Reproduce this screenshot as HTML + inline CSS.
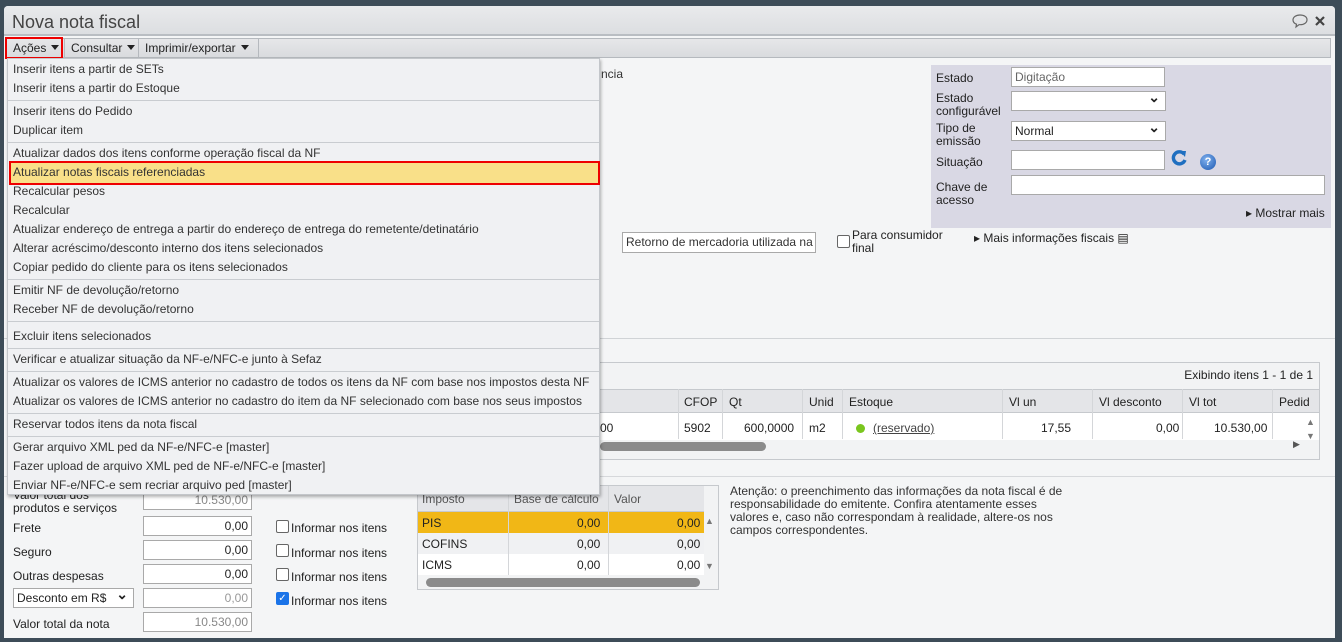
<!DOCTYPE html>
<html><head><meta charset="utf-8"><style>
*{box-sizing:border-box;margin:0;padding:0}
body{width:1342px;height:642px;background:#3d4c58;font-family:"Liberation Sans",Arial,sans-serif;font-size:12px;color:#222;position:relative;overflow:hidden}
.a{position:absolute;white-space:nowrap}
.win{left:4px;top:6px;width:1331px;height:632px;background:#f4f5f6;border-radius:4px 4px 0 0;overflow:hidden}
.title{left:0;top:0;width:1331px;height:30px;background:linear-gradient(#e9eaec,#dcdee1);border-bottom:2px solid #b9bdc2}
.title span{position:absolute;left:8px;top:6px;font-size:18px;color:#444}
.tb{left:2px;top:32px;width:1325px;height:20px;background:linear-gradient(#e6e7e9,#d9dbde);border:1px solid #b5b9be}
.tb div{position:absolute;top:0;height:18px;line-height:18px;padding-left:6px;border-right:1px solid #b5b9be}
.tri{display:inline-block;width:0;height:0;border-left:4px solid transparent;border-right:4px solid transparent;border-top:5px solid #222;margin-left:5px;vertical-align:2px}
.inp{position:absolute;background:#fff;border:1px solid #a9a9a9;height:20px;line-height:18px;padding:0 3px;font-size:12px;white-space:nowrap;overflow:hidden}
.sel::after{content:"⌄";position:absolute;right:5px;top:-4px;font-size:14px;font-weight:bold}
.menu{left:3px;top:52px;width:593px;height:437px;background:#f0f1f3;border:1px solid #c3c6ca;box-shadow:1px 2px 3px rgba(0,0,0,.3)}
.mi{position:absolute;left:5px;height:19px;line-height:19px;white-space:nowrap;color:#333}
.sep{position:absolute;left:0;width:591px;height:1px;background:#c9ccd0}
.cb{position:absolute;width:13px;height:13px;border:1px solid #666;border-radius:2px;background:#fff}
</style></head><body>
<div class="a win">
 <div class="a title"><span>Nova nota fiscal</span>
  <svg class="a" style="left:1287px;top:7px" width="18" height="16" viewBox="0 0 18 16"><path d="M9 2C5 2 2 4 2 7c0 2 1.5 3.5 3.5 4.2L5 14l3-2.3c.3 0 .7 0 1 0 4 0 7-2 7-5S13 2 9 2z" fill="none" stroke="#666" stroke-width="1.2"/></svg>
  <svg class="a" style="left:1311px;top:10px" width="10" height="10"><path d="M1 1L9 9M9 1L1 9" stroke="#444" stroke-width="2.2"/></svg>
 </div>
 <div class="a tb">
  <div style="left:0;width:58px">Ações<span class="tri"></span></div>
  <div style="left:58px;width:74px">Consultar<span class="tri"></span></div>
  <div style="left:132px;width:120px">Imprimir/exportar<span class="tri"></span></div>
 </div>
 <div class="a" style="left:1px;top:31px;width:58px;height:22px;border:2px solid #e00"></div>

 <div class="a" style="left:597px;top:61px;color:#333">ncia</div>
 <div class="a" style="left:927px;top:59px;width:400px;height:163px;background:#d9d8e4">
  <div class="a" style="left:5px;top:6px">Estado</div>
  <div class="inp" style="left:80px;top:2px;width:154px;color:#666">Digitação</div>
  <div class="a" style="left:5px;top:27px;line-height:13px">Estado<br>configurável</div>
  <div class="inp sel" style="left:80px;top:26px;width:155px"></div>
  <div class="a" style="left:5px;top:57px;line-height:13px">Tipo de<br>emissão</div>
  <div class="inp sel" style="left:80px;top:56px;width:155px">Normal</div>
  <div class="a" style="left:5px;top:90px">Situação</div>
  <div class="inp" style="left:80px;top:85px;width:154px"></div>
  <svg class="a" style="left:240px;top:85px" width="16" height="16" viewBox="0 0 16 16"><path d="M13 4A6 6 0 1 0 14 10" fill="none" stroke="#1f6fc0" stroke-width="3.4"/><path d="M9 1l6 0-1 6z" fill="#1f6fc0"/></svg>
  <div class="a" style="left:269px;top:89px;width:16px;height:16px;border-radius:50%;background:radial-gradient(circle at 40% 35%,#7fb0ee,#1c58b0);color:#fff;font-weight:bold;font-size:11px;text-align:center;line-height:16px">?</div>
  <div class="a" style="left:5px;top:116px;line-height:13px">Chave de<br>acesso</div>
  <div class="inp" style="left:80px;top:110px;width:314px"></div>
  <div class="a" style="left:315px;top:141px">▸ Mostrar mais</div>
 </div>
 <div class="inp" style="left:618px;top:226px;width:194px;height:21px;color:#333">Retorno de mercadoria utilizada na</div>
 <div class="cb" style="left:833px;top:229px"></div>
 <div class="a" style="left:848px;top:223px;line-height:13px">Para consumidor<br>final</div>
 <div class="a" style="left:970px;top:225px">▸ Mais informações fiscais ▤</div>

 <div class="a" style="left:0;top:332px;width:1331px;height:1px;background:#d0d3d6"></div>
 <div class="a" style="left:346px;top:356px;width:970px;height:98px;background:#f2f3f4;border:1px solid #c6c9cd">
  <div class="a" style="right:6px;top:5px">Exibindo itens 1 - 1 de 1</div>
  <div class="a" style="left:0;top:26px;width:968px;height:24px;background:#e4e5e8;border-top:1px solid #c6c9cd;border-bottom:1px solid #c6c9cd"></div>
  <div class="a" style="left:0;top:50px;width:968px;height:27px;background:#fff"></div>
 </div>
 <div class="a" style="left:596px;top:383px;font-size:12px">
  <div class="a" style="left:78px;top:0;height:50px;border-left:1px solid #d4d6d9"></div>
  <div class="a" style="left:122px;top:0;height:50px;border-left:1px solid #d4d6d9"></div>
  <div class="a" style="left:202px;top:0;height:50px;border-left:1px solid #d4d6d9"></div>
  <div class="a" style="left:242px;top:0;height:50px;border-left:1px solid #d4d6d9"></div>
  <div class="a" style="left:402px;top:0;height:50px;border-left:1px solid #d4d6d9"></div>
  <div class="a" style="left:492px;top:0;height:50px;border-left:1px solid #d4d6d9"></div>
  <div class="a" style="left:582px;top:0;height:50px;border-left:1px solid #d4d6d9"></div>
  <div class="a" style="left:672px;top:0;height:50px;border-left:1px solid #d4d6d9"></div>
  <div class="a" style="left:84px;top:6px">CFOP</div><div class="a" style="left:129px;top:6px">Qt</div>
  <div class="a" style="left:209px;top:6px">Unid</div><div class="a" style="left:249px;top:6px">Estoque</div>
  <div class="a" style="left:409px;top:6px">Vl un</div><div class="a" style="left:499px;top:6px">Vl desconto</div>
  <div class="a" style="left:589px;top:6px">Vl tot</div><div class="a" style="left:679px;top:6px">Pedid</div>
  <div class="a" style="left:0;top:32px">00</div><div class="a" style="left:84px;top:32px">5902</div>
  <div class="a" style="left:144px;top:32px">600,0000</div><div class="a" style="left:209px;top:32px">m2</div>
  <div class="a" style="left:256px;top:35px;width:9px;height:9px;border-radius:50%;background:#7ac61e"></div>
  <div class="a" style="left:273px;top:32px;text-decoration:underline;color:#444">(reservado)</div>
  <div class="a" style="left:441px;top:32px">17,55</div><div class="a" style="left:556px;top:32px">0,00</div>
  <div class="a" style="left:614px;top:32px">10.530,00</div>
  <div class="a" style="left:706px;top:26px;font-size:9px;color:#777;line-height:14px">▲<br>▼</div>
 </div>
 <div class="a" style="left:596px;top:436px;width:166px;height:9px;border-radius:5px;background:#8b8b8b"></div>
 <div class="a" style="left:1289px;top:433px;font-size:9px;color:#555">▶</div>
 <div class="a" style="left:0;top:470px;width:1331px;height:1px;background:#d6d8db"></div>

 <div class="a" style="left:9px;top:483px;line-height:13px">Valor total dos<br>produtos e serviços</div>
 <div class="inp" style="left:139px;top:484px;width:109px;text-align:right;color:#888">10.530,00</div>
 <div class="a" style="left:9px;top:515px">Frete</div><div class="inp" style="left:139px;top:510px;width:109px;text-align:right">0,00</div>
 <div class="a" style="left:9px;top:539px">Seguro</div><div class="inp" style="left:139px;top:534px;width:109px;text-align:right">0,00</div>
 <div class="a" style="left:9px;top:563px">Outras despesas</div><div class="inp" style="left:139px;top:558px;width:109px;text-align:right">0,00</div>
 <div class="inp sel" style="left:9px;top:582px;width:121px">Desconto em R$</div>
 <div class="inp" style="left:139px;top:582px;width:109px;text-align:right;color:#999">0,00</div>
 <div class="a" style="left:9px;top:611px">Valor total da nota</div><div class="inp" style="left:139px;top:606px;width:109px;text-align:right;color:#888">10.530,00</div>
 <div class="cb" style="left:272px;top:514px"></div><div class="a" style="left:287px;top:515px">Informar nos itens</div>
 <div class="cb" style="left:272px;top:538px"></div><div class="a" style="left:287px;top:540px">Informar nos itens</div>
 <div class="cb" style="left:272px;top:562px"></div><div class="a" style="left:287px;top:564px">Informar nos itens</div>
 <div class="cb" style="left:272px;top:586px;background:#1a73e8;border-color:#1a73e8;color:#fff;font-size:10px;line-height:11px;text-align:center">✓</div><div class="a" style="left:287px;top:588px">Informar nos itens</div>

 <div class="a" style="left:413px;top:479px;width:302px;height:105px;background:#f2f3f4;border:1px solid #c6c9cd">
  <div class="a" style="left:0;top:0;width:286px;height:26px;background:#e4e5e8;border-bottom:1px solid #c6c9cd"></div>
  <div class="a" style="left:4px;top:6px;color:#555">Imposto</div><div class="a" style="left:96px;top:6px;color:#555">Base de cálculo</div><div class="a" style="left:196px;top:6px;color:#555">Valor</div>
  <div class="a" style="left:0;top:26px;width:286px;height:21px;background:#f1b716"></div>
  <div class="a" style="left:0;top:47px;width:286px;height:21px;background:#f0f1f3"></div>
  <div class="a" style="left:0;top:68px;width:286px;height:21px;background:#fff"></div>
  <div class="a" style="left:90px;top:0;height:89px;border-left:1px solid #d4d6d9"></div>
  <div class="a" style="left:190px;top:0;height:89px;border-left:1px solid #d4d6d9"></div>
  <div class="a" style="left:4px;top:30px">PIS</div><div class="a" style="left:159px;top:30px">0,00</div><div class="a" style="left:259px;top:30px">0,00</div>
  <div class="a" style="left:4px;top:51px">COFINS</div><div class="a" style="left:159px;top:51px">0,00</div><div class="a" style="left:259px;top:51px">0,00</div>
  <div class="a" style="left:4px;top:72px">ICMS</div><div class="a" style="left:159px;top:72px">0,00</div><div class="a" style="left:259px;top:72px">0,00</div>
  <div class="a" style="left:287px;top:30px;font-size:9px;color:#777">▲</div><div class="a" style="left:287px;top:75px;font-size:9px;color:#777">▼</div>
  <div class="a" style="left:8px;top:92px;width:274px;height:9px;border-radius:5px;background:#8b8b8b"></div>
 </div>
 <div class="a" style="left:726px;top:479px;width:340px;line-height:13px;color:#333;white-space:normal">Atenção: o preenchimento das informações da nota fiscal é de responsabilidade do emitente. Confira atentamente esses valores e, caso não correspondam à realidade, altere-os nos campos correspondentes.</div>

 <div class="a menu">
  <div class="mi" style="top:1px">Inserir itens a partir de SETs</div>
  <div class="mi" style="top:20px">Inserir itens a partir do Estoque</div>
  <div class="sep" style="top:41px"></div>
  <div class="mi" style="top:43px">Inserir itens do Pedido</div>
  <div class="mi" style="top:62px">Duplicar item</div>
  <div class="sep" style="top:83px"></div>
  <div class="mi" style="top:85px">Atualizar dados dos itens conforme operação fiscal da NF</div>
  <div class="a" style="left:2px;top:104px;width:588px;height:20px;background:#f9e089"></div>
  <div class="mi" style="top:104px">Atualizar notas fiscais referenciadas</div>
  <div class="a" style="left:1px;top:102px;width:591px;height:24px;border:2px solid #e00"></div>
  <div class="mi" style="top:123px">Recalcular pesos</div>
  <div class="mi" style="top:142px">Recalcular</div>
  <div class="mi" style="top:161px">Atualizar endereço de entrega a partir do endereço de entrega do remetente/detinatário</div>
  <div class="mi" style="top:180px">Alterar acréscimo/desconto interno dos itens selecionados</div>
  <div class="mi" style="top:199px">Copiar pedido do cliente para os itens selecionados</div>
  <div class="sep" style="top:220px"></div>
  <div class="mi" style="top:222px">Emitir NF de devolução/retorno</div>
  <div class="mi" style="top:241px">Receber NF de devolução/retorno</div>
  <div class="sep" style="top:262px"></div>
  <div class="mi" style="top:268px">Excluir itens selecionados</div>
  <div class="sep" style="top:289px"></div>
  <div class="mi" style="top:291px">Verificar e atualizar situação da NF-e/NFC-e junto à Sefaz</div>
  <div class="sep" style="top:312px"></div>
  <div class="mi" style="top:314px">Atualizar os valores de ICMS anterior no cadastro de todos os itens da NF com base nos impostos desta NF</div>
  <div class="mi" style="top:333px">Atualizar os valores de ICMS anterior no cadastro do item da NF selecionado com base nos seus impostos</div>
  <div class="sep" style="top:354px"></div>
  <div class="mi" style="top:356px">Reservar todos itens da nota fiscal</div>
  <div class="sep" style="top:377px"></div>
  <div class="mi" style="top:379px">Gerar arquivo XML ped da NF-e/NFC-e [master]</div>
  <div class="mi" style="top:398px">Fazer upload de arquivo XML ped de NF-e/NFC-e [master]</div>
  <div class="mi" style="top:417px">Enviar NF-e/NFC-e sem recriar arquivo ped [master]</div>
 </div>
</div>
</body></html>
